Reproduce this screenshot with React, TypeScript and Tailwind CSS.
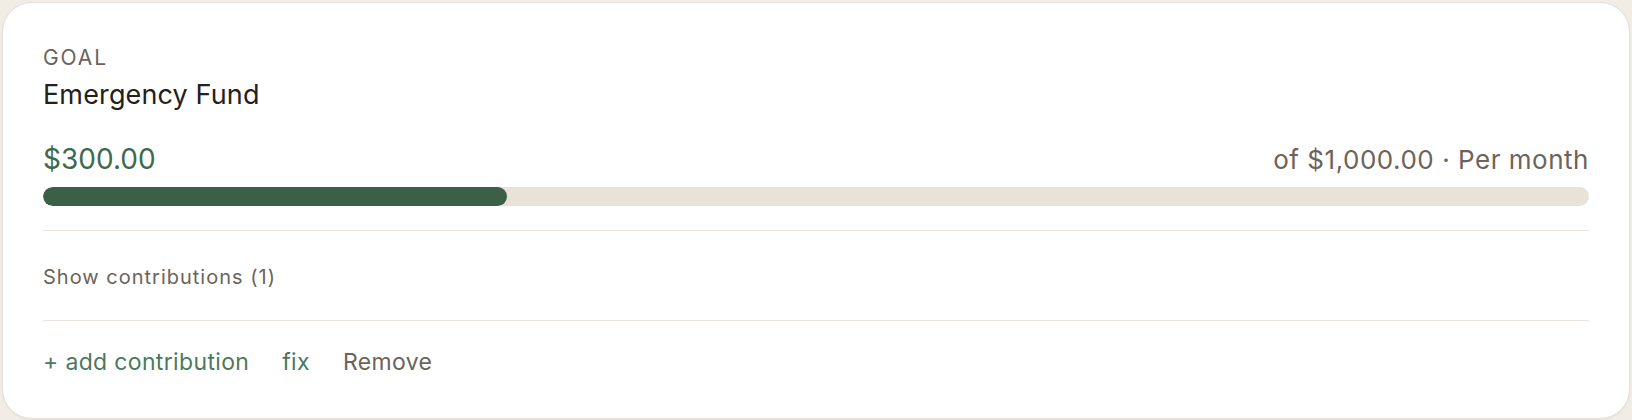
import React from "react";

const goal = {
  name: "Emergency Fund",
  saved: 300,
  target: 1000,
  cadence: "Per month",
  contributions: 1,
};

const money = (n: number) =>
  "$" + n.toLocaleString("en-US", { minimumFractionDigits: 2, maximumFractionDigits: 2 });

export default function App() {
  const pct = Math.min(100, (goal.saved / goal.target) * 100);
  return (
    <div
      className="min-h-[420px] bg-[#f1ede5] p-[2px]"
      style={{ fontFamily: "Inter, 'Noto Sans', sans-serif" }}
    >
      <div className="rounded-[30px] border border-[#e6e0d5] bg-white px-[40px] pt-[43px] pb-[42px] shadow-[0_1px_2px_rgba(60,50,30,0.06)]">
        <div className="text-[21px] leading-[24px] tracking-[0.09em] text-[#6c635a]">GOAL</div>
        <div className="mt-[9px] text-[27px] leading-[32px] tracking-[0.005em] text-[#24201c]">{goal.name}</div>

        <div className="mt-[32px] flex items-baseline justify-between">
          <span className="text-[28px] leading-[32px] text-[#3d6a4e]">{money(goal.saved)}</span>
          <span className="text-[26px] leading-[32px] tracking-[0.02em] text-[#6c635a]">
            of {money(goal.target)} · {goal.cadence}
          </span>
        </div>

        <div className="mt-[11px] h-[19px] w-full overflow-hidden rounded-full bg-[#e9e2d7]">
          <div className="h-full rounded-full bg-[#3c5f48]" style={{ width: `${pct}%` }} />
        </div>

        <div className="mt-[24px] h-px bg-[#ebe5db]" />

        <button className="mt-[34px] block text-[20px] leading-[24px] tracking-[0.05em] text-[#6c635a]">
          Show contributions ({goal.contributions})
        </button>

        <div className="mt-[31px] h-px bg-[#ebe5db]" />

        <div className="mt-[27px] flex items-baseline gap-[33px] text-[23px] leading-[28px] tracking-[0.015em]">
          <button className="text-[#4a7a5c]">+ add contribution</button>
          <button className="text-[#4a7a5c]">fix</button>
          <button className="text-[#6c635a]">Remove</button>
        </div>
      </div>
    </div>
  );
}
